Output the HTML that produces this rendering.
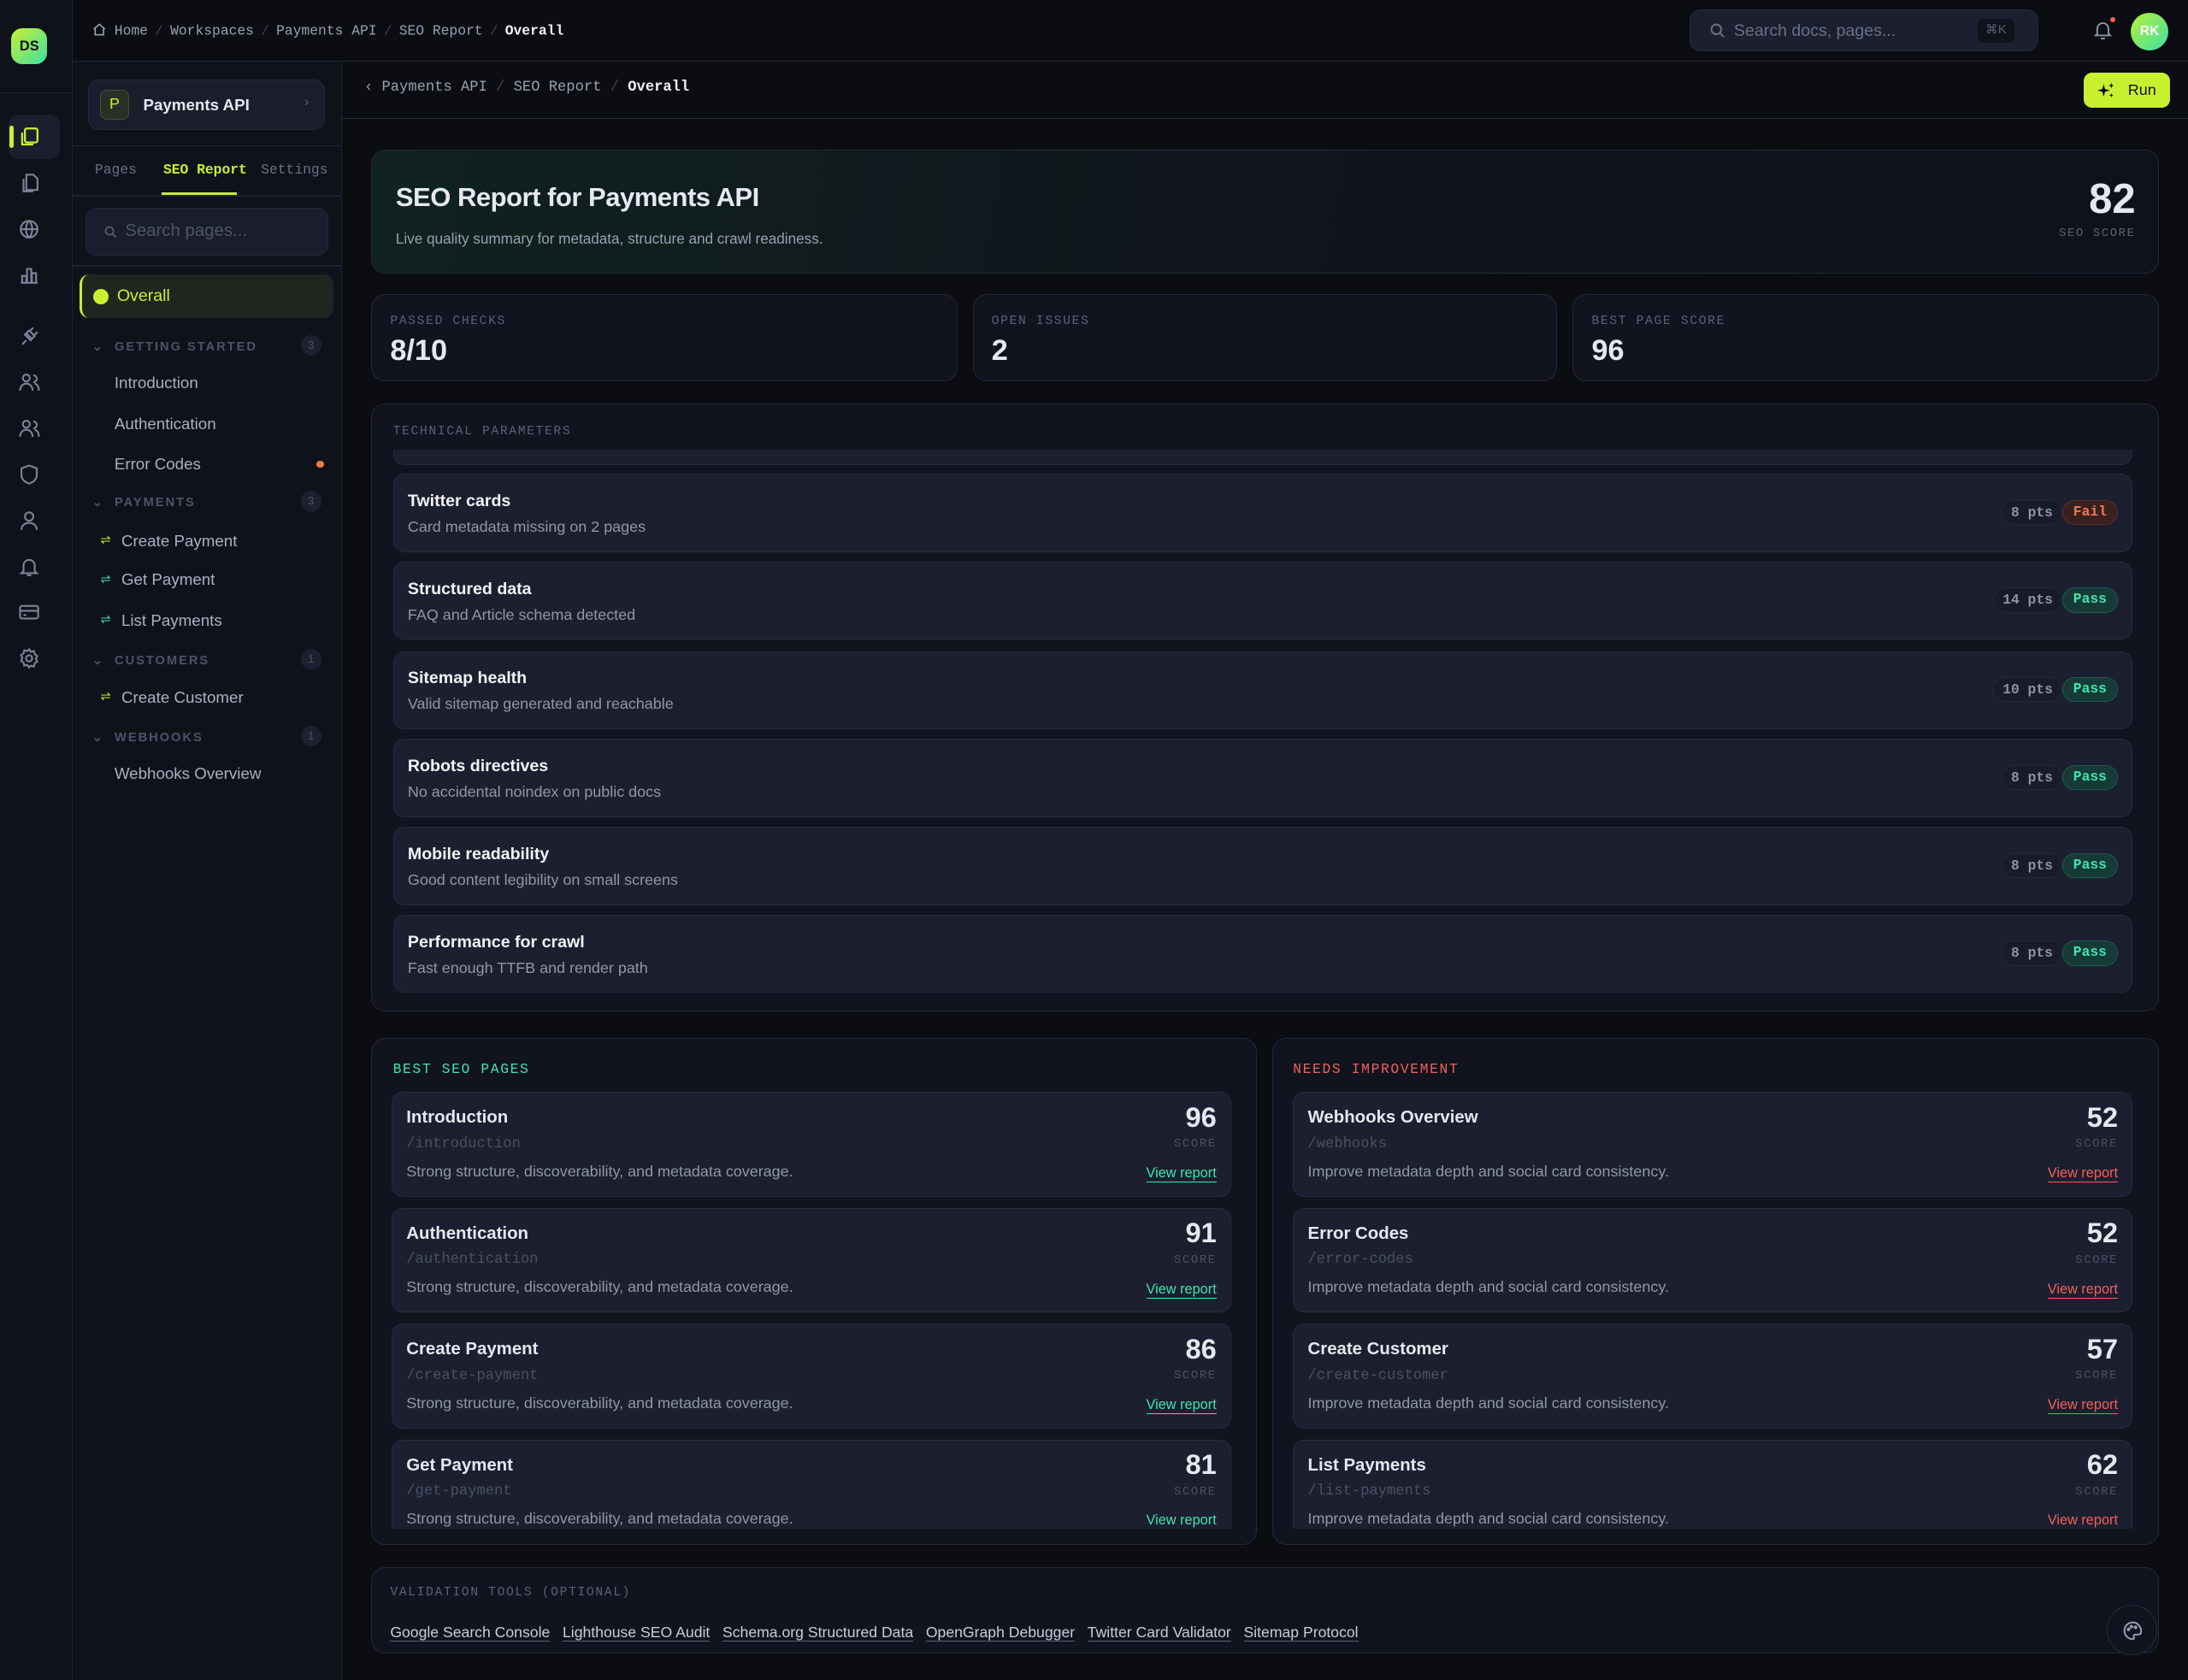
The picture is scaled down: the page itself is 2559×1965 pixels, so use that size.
<!DOCTYPE html>
<html><head><meta charset="utf-8"><style>
*{box-sizing:border-box;margin:0;padding:0}
html,body{width:2559px;height:1965px;overflow:hidden;background:#0b0d13}
#w{zoom:1.632;width:1568px;height:1204px;position:relative;font-family:"Liberation Sans",sans-serif;color:#e6e8ef;background:#0b0d13}
.a{position:absolute}
.mono{font-family:"Liberation Mono",monospace}
.rail{left:0;top:0;width:52px;height:1204px;background:#0f121b;border-right:1px solid #1f2332}
.side{left:52px;top:44px;width:193px;height:1160px;background:#0f121b;border-right:1px solid #1f2332}
.top{left:52px;top:0;right:0;height:44px;border-bottom:1px solid #222637;background:#0b0d13}
.card{background:#11141f;border:1px solid #23273a;border-radius:10px}
.row{left:15px;right:18px;height:56px;background:#1c1f2f;border:1px solid #262a3c;border-radius:8px}
.row b{position:absolute;left:10px;top:12px;font-size:12px;color:#f2f3f7}
.row span{position:absolute;left:10px;top:31px;font-size:11px;color:#9197a8}
.pts{position:absolute;right:50px;top:18px;height:18px;padding:0 6px;border-radius:9px;background:#181b29;border:1px solid #23273a;font:bold 10px/17px "Liberation Mono",monospace;color:#8d93a5}
.pill{position:absolute;right:10px;top:18px;height:18px;width:40px;text-align:center;border-radius:9px;font:bold 10px/16px "Liberation Mono",monospace}
.pass{background:#163a37;border:1px solid #1f5a4f;color:#43e3ad}
.fail{background:#3a211f;border:1px solid #5a2f2a;color:#f07a55}
.lbl{font:10px "Liberation Mono",monospace;letter-spacing:1px;color:#5b6175}
.it{left:14px;right:18px;height:75px;background:#1c1f2f;border:1px solid #262a3c;border-radius:8px}
.it b{position:absolute;left:10px;top:11px;font-size:12.5px}
.it .p{position:absolute;left:10px;top:31px;font:10.5px "Liberation Mono",monospace;color:#4a5063}
.it .d{position:absolute;left:10px;top:50px;font-size:11px;color:#9197a8}
.it .n{position:absolute;right:10px;top:6px;font-size:20px;font-weight:bold}
.it .s{position:absolute;right:10px;top:32px;font:8.5px "Liberation Mono",monospace;letter-spacing:1px;color:#4a5063}
.it a{position:absolute;right:10px;top:52px;font-size:10px;text-decoration:none;border-bottom:1px solid}
.g a{color:#43e3ad}.r a{color:#f0605a}
.nav{position:absolute;left:30px;font-size:11.5px;color:#aab0c0}
.grp{position:absolute;left:14px;font:bold 9px "Liberation Sans",sans-serif;letter-spacing:1.2px;color:#4c5368}
.cnt{position:absolute;right:14px;width:15px;height:15px;border-radius:8px;background:#1c2030;font-size:8px;color:#4c5368;text-align:center;line-height:15px}
.ar{position:absolute;left:20px;font-size:9px}
.ic{position:absolute;left:13px;width:16px;height:16px}
.tl{color:#c8cdd9;text-decoration:none;border-bottom:1px solid #5b6175;font-size:10.8px;margin-right:9px}
.sep{color:#3a3f52;margin:0 5px}
</style></head><body><div id="w">

<div class="a rail">
 <div class="a" style="left:8px;top:20px;width:26px;height:26px;border-radius:8px;background:linear-gradient(135deg,#c8f031,#3ee0a5);color:#0b0d13;font:bold 10px/26px 'Liberation Sans';text-align:center">DS</div>
 <div class="a" style="left:0;top:66px;width:52px;height:1px;background:#1f2332"></div>
 <div class="a" style="left:6px;top:82px;width:37px;height:32px;border-radius:7px;background:#1b1f2d"></div>
 <div class="a" style="left:7px;top:90px;width:3px;height:16px;background:#c8f031;border-radius:2px"></div>
 <svg class="ic" style="top:90px" viewBox="0 0 16 16" fill="none" stroke="#c8f031" stroke-width="1.4"><rect x="5" y="2" width="9" height="10" rx="1.5"/><path d="M3 5v8.5h8"/></svg>
 <svg class="ic" style="top:123px" viewBox="0 0 16 16" fill="none" stroke="#7d8396" stroke-width="1.3"><path d="M6 2h5l3 3v8H6z"/><path d="M4 5v9h7"/></svg>
 <svg class="ic" style="top:156px" viewBox="0 0 16 16" fill="none" stroke="#7d8396" stroke-width="1.3"><circle cx="8" cy="8" r="6"/><path d="M2 8h12M8 2c-3 3-3 9 0 12M8 2c3 3 3 9 0 12"/></svg>
 <svg class="ic" style="top:189px" viewBox="0 0 16 16" fill="none" stroke="#7d8396" stroke-width="1.3"><path d="M2 14h12M3 14V9h3v5M6.5 14V4h3v10M10 14V7h3v7"/></svg>
 <svg class="ic" style="top:233px" viewBox="0 0 16 16" fill="none" stroke="#7d8396" stroke-width="1.3"><path d="M3 14l3-3M6 6l4 4M8 4l4 4-3 3-4-4zM11 2l-2 2M14 5l-2 2"/></svg>
 <svg class="ic" style="top:266px" viewBox="0 0 16 16" fill="none" stroke="#7d8396" stroke-width="1.3"><circle cx="6" cy="5" r="2.5"/><path d="M1.5 14c0-3 2-5 4.5-5s4.5 2 4.5 5M11 3a2.5 2.5 0 010 5M12 9c2 .5 3 2.5 3 5"/></svg>
 <svg class="ic" style="top:299px" viewBox="0 0 16 16" fill="none" stroke="#7d8396" stroke-width="1.3"><circle cx="6" cy="5" r="2.5"/><path d="M1.5 14c0-3 2-5 4.5-5s4.5 2 4.5 5M11 3a2.5 2.5 0 010 5M12 9c2 .5 3 2.5 3 5"/></svg>
 <svg class="ic" style="top:332px" viewBox="0 0 16 16" fill="none" stroke="#7d8396" stroke-width="1.3"><path d="M8 1.5l5.5 2v4.5c0 3.5-2.5 5.5-5.5 6.5-3-1-5.5-3-5.5-6.5V3.5z"/></svg>
 <svg class="ic" style="top:365px" viewBox="0 0 16 16" fill="none" stroke="#7d8396" stroke-width="1.3"><circle cx="8" cy="5" r="3"/><path d="M2.5 14.5c0-3 2.5-5 5.5-5s5.5 2 5.5 5"/></svg>
 <svg class="ic" style="top:398px" viewBox="0 0 16 16" fill="none" stroke="#7d8396" stroke-width="1.3"><path d="M4 11V7a4 4 0 018 0v4l1.5 1.5h-11zM6.5 14h3"/></svg>
 <svg class="ic" style="top:431px" viewBox="0 0 16 16" fill="none" stroke="#7d8396" stroke-width="1.3"><rect x="1.5" y="3.5" width="13" height="9" rx="1.5"/><path d="M1.5 7h13M4 10h2"/></svg>
 <svg class="ic" style="top:464px" viewBox="0 0 16 16" fill="none" stroke="#7d8396" stroke-width="1.3"><circle cx="8" cy="8" r="2.2"/><path d="M8 1.5l1.3 1.8 2.2-.5.5 2.2 1.8 1.3-1 2 1 2-1.8 1.3-.5 2.2-2.2-.5L8 14.5l-1.3-1.8-2.2.5-.5-2.2-1.8-1.3 1-2-1-2 1.8-1.3.5-2.2 2.2.5z"/></svg>
</div>

<div class="a top">
 <div class="a mono" style="left:14px;top:16px;font-size:10px;color:#9aa0b2;white-space:nowrap">
  <svg width="10" height="10" viewBox="0 0 10 10" fill="none" stroke="#9aa0b2" style="vertical-align:-1px"><path d="M1 5L5 1.5 9 5M2 4.5V9h6V4.5"/></svg> Home<span class="sep">/</span>Workspaces<span class="sep">/</span>Payments API<span class="sep">/</span>SEO Report<span class="sep">/</span><span style="color:#f0f1f5;font-weight:bold">Overall</span></div>
 <div class="a" style="left:1159px;top:7px;width:250px;height:30px;border-radius:8px;background:#1c1f2f;border:1px solid #262a3c">
  <svg class="a" style="left:14px;top:9px" width="11" height="11" viewBox="0 0 11 11" fill="none" stroke="#6a7084" stroke-width="1.2"><circle cx="4.5" cy="4.5" r="3.5"/><path d="M7 7l3 3"/></svg>
  <span class="a" style="left:31px;top:8px;font-size:12px;color:#6a7084">Search docs, pages...</span>
  <span class="a" style="right:17px;top:6px;width:26px;height:17px;border-radius:4px;background:#0f121b;font-size:9px;color:#5b6175;text-align:center;line-height:17px">⌘K</span>
 </div>
 <svg class="a" style="left:1448px;top:14px" width="14" height="15" viewBox="0 0 14 15" fill="none" stroke="#8d93a5" stroke-width="1.2"><path d="M3 10V6.5a4 4 0 018 0V10l1.2 1.3H1.8zM5.5 13.5h3"/></svg>
 <div class="a" style="left:1460px;top:12px;width:4px;height:4px;border-radius:2px;background:#f0605a"></div>
 <div class="a" style="left:1475px;top:9px;width:27px;height:27px;border-radius:14px;background:linear-gradient(135deg,#b8f03a,#3ee0a5);font:bold 9.5px/27px 'Liberation Sans';text-align:center;color:#fff">RK</div>
</div>

<div class="a side">
 <div class="a" style="left:11px;top:13px;width:170px;height:36px;border-radius:8px;background:#1a1d2b;border:1px solid #262a3c">
  <div class="a" style="left:8px;top:7px;width:21px;height:21px;border-radius:5px;background:#2a2f25;border:1px solid #46503a;color:#c8f031;font-size:11px;text-align:center;line-height:19px">P</div>
  <b class="a" style="left:39px;top:11px;font-size:11.5px">Payments API</b>
  <span class="a" style="right:11px;top:10px;font-size:10px;color:#5b6175">›</span>
 </div>
 <div class="a" style="left:0;top:60px;width:193px;height:1px;background:#1f2332"></div>
 <div class="a mono" style="left:16px;top:72px;font-size:10px;color:#6a7084">Pages</div>
 <div class="a mono" style="left:65px;top:72px;font-size:10px;color:#c8f031;font-weight:bold">SEO Report</div>
 <div class="a mono" style="left:135px;top:72px;font-size:10px;color:#6a7084">Settings</div>
 <div class="a" style="left:64px;top:94px;width:54px;height:2px;background:#c8f031"></div>
 <div class="a" style="left:0;top:96px;width:193px;height:1px;background:#1f2332"></div>
 <div class="a" style="left:9px;top:105px;width:174px;height:34px;border-radius:8px;background:#1a1d2b;border:1px solid #23273a">
  <svg class="a" style="left:13px;top:12px" width="9" height="9" viewBox="0 0 9 9" fill="none" stroke="#5b6175"><circle cx="3.7" cy="3.7" r="2.8"/><path d="M5.8 5.8L8.5 8.5"/></svg>
  <span class="a" style="left:28px;top:9px;font-size:12.5px;color:#4e5468">Search pages...</span>
 </div>
 <div class="a" style="left:0;top:146px;width:193px;height:1px;background:#1f2332"></div>
 <div class="a" style="left:5px;top:153px;width:182px;height:31px;border-radius:7px;background:#20261f;border-left:2px solid #c8f031">
  <div class="a" style="left:8px;top:10px;width:11px;height:11px;border-radius:6px;background:#c8f031"></div>
  <span class="a" style="left:25px;top:8px;font-size:12px;color:#c8f031">Overall</span>
 </div>
 <span class="grp" style="top:199px">⌄ &nbsp;GETTING STARTED</span><span class="cnt" style="top:196px">3</span>
 <span class="nav" style="top:224px">Introduction</span>
 <span class="nav" style="top:253px">Authentication</span>
 <span class="nav" style="top:282px">Error Codes</span><div class="a" style="left:175px;top:286px;width:5px;height:5px;border-radius:3px;background:#f07a45"></div>
 <span class="grp" style="top:311px">⌄ &nbsp;PAYMENTS</span><span class="cnt" style="top:308px">3</span>
 <span class="ar" style="top:338px;color:#c8f031">⇌</span><span class="nav" style="left:35px;top:337px">Create Payment</span>
 <span class="ar" style="top:366px;color:#43e3ad">⇌</span><span class="nav" style="left:35px;top:365px">Get Payment</span>
 <span class="ar" style="top:395px;color:#43e3ad">⇌</span><span class="nav" style="left:35px;top:394px">List Payments</span>
 <span class="grp" style="top:424px">⌄ &nbsp;CUSTOMERS</span><span class="cnt" style="top:421px">1</span>
 <span class="ar" style="top:450px;color:#c8f031">⇌</span><span class="nav" style="left:35px;top:449px">Create Customer</span>
 <span class="grp" style="top:479px">⌄ &nbsp;WEBHOOKS</span><span class="cnt" style="top:476px">1</span>
 <span class="nav" style="top:504px">Webhooks Overview</span>
</div>

<div class="a" style="left:245px;top:44px;right:0;height:41px;border-bottom:1px solid #222637">
 <div class="a mono" style="left:16px;top:13px;font-size:10.5px;color:#9aa0b2;white-space:nowrap">‹ Payments API <span style="color:#3a3f52">/</span> SEO Report <span style="color:#3a3f52">/</span> <b style="color:#f0f1f5">Overall</b></div>
 <div class="a" style="left:1248px;top:8px;width:62px;height:25px;border-radius:6px;background:#c8f031;color:#111;font-size:11px;line-height:25px">
  <svg class="a" style="left:10px;top:7px" width="12" height="12" viewBox="0 0 12 12" fill="#111"><path d="M4.5 1.5L5.5 5 9 6 5.5 7 4.5 10.5 3.5 7 0 6 3.5 5z"/><path d="M10 0.5l.5 1.5 1.5.5-1.5.5L10 4.5l-.5-1.5L8 2.5l1.5-.5z"/><path d="M10 8l.4 1.1 1.1.4-1.1.4L10 11l-.4-1.1-1.1-.4 1.1-.4z"/></svg>
  <span class="a" style="left:32px">Run</span>
 </div>
</div>

<div class="a card" style="left:266px;top:107px;width:1281px;height:89px;background:linear-gradient(100deg,#0f2220 0%,#10161c 45%,#0f121b 100%)">
 <b class="a" style="left:17px;top:23px;font-size:19px;letter-spacing:-.3px">SEO Report for Payments API</b>
 <span class="a" style="left:17px;top:57px;font-size:10.5px;color:#9aa0b2">Live quality summary for metadata, structure and crawl readiness.</span>
 <b class="a" style="right:16px;top:18px;font-size:30px">82</b>
 <span class="a lbl" style="right:16px;top:55px;font-size:8.5px">SEO SCORE</span>
</div>

<div class="a card" style="left:266px;top:211px;width:420px;height:62px"><span class="a lbl" style="left:13px;top:14px;font-size:9px">PASSED CHECKS</span><b class="a" style="left:13px;top:28px;font-size:21px">8/10</b></div>
<div class="a card" style="left:697px;top:211px;width:419px;height:62px"><span class="a lbl" style="left:13px;top:14px;font-size:9px">OPEN ISSUES</span><b class="a" style="left:13px;top:28px;font-size:21px">2</b></div>
<div class="a card" style="left:1127px;top:211px;width:420px;height:62px"><span class="a lbl" style="left:13px;top:14px;font-size:9px">BEST PAGE SCORE</span><b class="a" style="left:13px;top:28px;font-size:21px">96</b></div>

<div class="a card" style="left:266px;top:289px;width:1281px;height:436px;overflow:hidden">
 <span class="a lbl" style="left:15px;top:15px;font-size:9px">TECHNICAL PARAMETERS</span>
 <div class="a row" style="top:33px;height:11px;border-top:none;border-radius:0 0 8px 8px"></div>
 <div class="a row" style="top:50px"><b>Twitter cards</b><span>Card metadata missing on 2 pages</span><i class="pts">8 pts</i><i class="pill fail">Fail</i></div>
 <div class="a row" style="top:113px"><b>Structured data</b><span>FAQ and Article schema detected</span><i class="pts">14 pts</i><i class="pill pass">Pass</i></div>
 <div class="a row" style="top:177px"><b>Sitemap health</b><span>Valid sitemap generated and reachable</span><i class="pts">10 pts</i><i class="pill pass">Pass</i></div>
 <div class="a row" style="top:240px"><b>Robots directives</b><span>No accidental noindex on public docs</span><i class="pts">8 pts</i><i class="pill pass">Pass</i></div>
 <div class="a row" style="top:303px"><b>Mobile readability</b><span>Good content legibility on small screens</span><i class="pts">8 pts</i><i class="pill pass">Pass</i></div>
 <div class="a row" style="top:366px"><b>Performance for crawl</b><span>Fast enough TTFB and render path</span><i class="pts">8 pts</i><i class="pill pass">Pass</i></div>
</div>

<div class="a card g" style="left:266px;top:744px;width:635px;height:363px">
 <span class="a mono" style="left:15px;top:16px;font-size:10px;letter-spacing:1px;color:#43e3ad">BEST SEO PAGES</span>
 <div class="a" style="left:0;top:37px;right:0;height:314px;overflow:hidden">
  <div class="a it" style="top:1px"><b>Introduction</b><span class="p">/introduction</span><span class="d">Strong structure, discoverability, and metadata coverage.</span><span class="n">96</span><span class="s">SCORE</span><a>View report</a></div>
  <div class="a it" style="top:84px"><b>Authentication</b><span class="p">/authentication</span><span class="d">Strong structure, discoverability, and metadata coverage.</span><span class="n">91</span><span class="s">SCORE</span><a>View report</a></div>
  <div class="a it" style="top:167px"><b>Create Payment</b><span class="p">/create-payment</span><span class="d">Strong structure, discoverability, and metadata coverage.</span><span class="n">86</span><span class="s">SCORE</span><a>View report</a></div>
  <div class="a it" style="top:250px"><b>Get Payment</b><span class="p">/get-payment</span><span class="d">Strong structure, discoverability, and metadata coverage.</span><span class="n">81</span><span class="s">SCORE</span><a>View report</a></div>
 </div>
</div>

<div class="a card r" style="left:912px;top:744px;width:635px;height:363px">
 <span class="a mono" style="left:14px;top:16px;font-size:10px;letter-spacing:1px;color:#f0605a">NEEDS IMPROVEMENT</span>
 <div class="a" style="left:0;top:37px;right:0;height:314px;overflow:hidden">
  <div class="a it" style="top:1px"><b>Webhooks Overview</b><span class="p">/webhooks</span><span class="d">Improve metadata depth and social card consistency.</span><span class="n">52</span><span class="s">SCORE</span><a>View report</a></div>
  <div class="a it" style="top:84px"><b>Error Codes</b><span class="p">/error-codes</span><span class="d">Improve metadata depth and social card consistency.</span><span class="n">52</span><span class="s">SCORE</span><a>View report</a></div>
  <div class="a it" style="top:167px"><b>Create Customer</b><span class="p">/create-customer</span><span class="d">Improve metadata depth and social card consistency.</span><span class="n">57</span><span class="s">SCORE</span><a>View report</a></div>
  <div class="a it" style="top:250px"><b>List Payments</b><span class="p">/list-payments</span><span class="d">Improve metadata depth and social card consistency.</span><span class="n">62</span><span class="s">SCORE</span><a>View report</a></div>
 </div>
</div>

<div class="a card" style="left:266px;top:1123px;width:1281px;height:62px">
 <span class="a lbl" style="left:13px;top:13px;font-size:9px">VALIDATION TOOLS (OPTIONAL)</span>
 <div class="a" style="left:13px;top:35px;white-space:nowrap"><a class="tl">Google Search Console</a><a class="tl">Lighthouse SEO Audit</a><a class="tl">Schema.org Structured Data</a><a class="tl">OpenGraph Debugger</a><a class="tl">Twitter Card Validator</a><a class="tl">Sitemap Protocol</a></div>
</div>
<div class="a" style="left:1510px;top:1150px;width:36px;height:36px;border-radius:18px;background:#11141f;border:1px solid #262a3c">
 <svg class="a" style="left:11px;top:11px" width="14" height="14" viewBox="0 0 14 14" fill="none" stroke="#9aa0b2" stroke-width="1.2"><path d="M7 1a6 6 0 100 12c1 0 1.2-.8.8-1.5-.5-.8 0-1.8 1-1.8H11a2 2 0 002-2C13 4 10.5 1 7 1z"/><circle cx="4" cy="6" r=".7"/><circle cx="6" cy="4" r=".7"/><circle cx="9" cy="4.5" r=".7"/></svg>
</div>
</div></body></html>
